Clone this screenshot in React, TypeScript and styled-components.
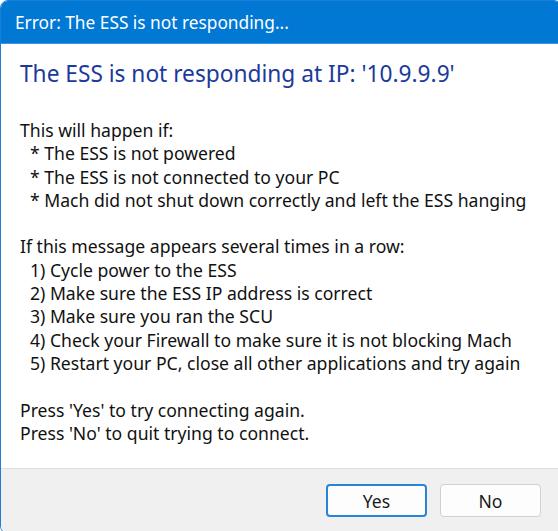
import React from "react";
import styled, { createGlobalStyle } from "styled-components";

const Global = createGlobalStyle`
  html, body { margin: 0; padding: 0; background: #ffffff; overflow: hidden; }
  #root { width: 558px; height: 531px; overflow: hidden; }
`;

const Window = styled.div`
  width: 562px;
  height: 534px;
  box-sizing: border-box;
  border: 1px solid #1a7fd9;
  border-radius: 8px;
  overflow: hidden;
  display: flex;
  flex-direction: column;
  background: #ffffff;
  font-family: "Noto Sans", "Open Sans", sans-serif;
`;

const TitleBar = styled.div`
  height: 43px;
  flex: none;
  box-sizing: border-box;
  background: #0078d4;
  color: #ffffff;
  display: flex;
  align-items: center;
  padding-left: 14px;
  font-size: 17.3px;
  border-bottom: 1px solid #3d97e0;
`;

const Content = styled.div`
  flex: 1;
  padding: 15px 0 0 19px;
  display: flex;
  flex-direction: column;
`;

const Heading = styled.div`
  color: #1b3a9c;
  font-size: 22.7px;
  line-height: 30px;
  margin-bottom: 30px;
`;

const Para = styled.div`
  color: #111111;
  font-size: 17.6px;
  line-height: 23.3px;
  margin-bottom: 23.3px;
`;

const Line = styled.div<{ $indent?: boolean }>`
  white-space: nowrap;
  padding-left: ${(p) => (p.$indent ? "10px" : "0")};
`;

const Footer = styled.div`
  height: 65px;
  flex: none;
  box-sizing: border-box;
  background: #f0f0f0;
  border-top: 1px solid #dfdfdf;
  display: flex;
  justify-content: flex-end;
  align-items: flex-start;
  gap: 13px;
  padding: 15px 20px 0 0;
`;

const Button = styled.button<{ $primary?: boolean }>`
  width: 101px;
  height: 33px;
  box-sizing: border-box;
  background: #fdfdfd;
  border: ${(p) => (p.$primary ? "2px solid #2a84d6" : "1px solid #d0d0d0")};
  border-radius: 4px;
  font-family: "Noto Sans", "Open Sans", sans-serif;
  font-size: 17.6px;
  color: #1a1a1a;
  padding: 0;
`;

export default function App() {
  return (
    <>
      <Global />
      <Window>
        <TitleBar>Error: The ESS is not responding...</TitleBar>
        <Content>
          <Heading>The ESS is not responding at IP: '10.9.9.9'</Heading>
          <Para>
            <Line>This will happen if:</Line>
            <Line $indent>* The ESS is not powered</Line>
            <Line $indent>* The ESS is not connected to your PC</Line>
            <Line $indent>* Mach did not shut down correctly and left the ESS hanging</Line>
          </Para>
          <Para>
            <Line>If this message appears several times in a row:</Line>
            <Line $indent>1) Cycle power to the ESS</Line>
            <Line $indent>2) Make sure the ESS IP address is correct</Line>
            <Line $indent>3) Make sure you ran the SCU</Line>
            <Line $indent>4) Check your Firewall to make sure it is not blocking Mach</Line>
            <Line $indent>5) Restart your PC, close all other applications and try again</Line>
          </Para>
          <Para>
            <Line>Press 'Yes' to try connecting again.</Line>
            <Line>Press 'No' to quit trying to connect.</Line>
          </Para>
        </Content>
        <Footer>
          <Button $primary>Yes</Button>
          <Button>No</Button>
        </Footer>
      </Window>
    </>
  );
}
